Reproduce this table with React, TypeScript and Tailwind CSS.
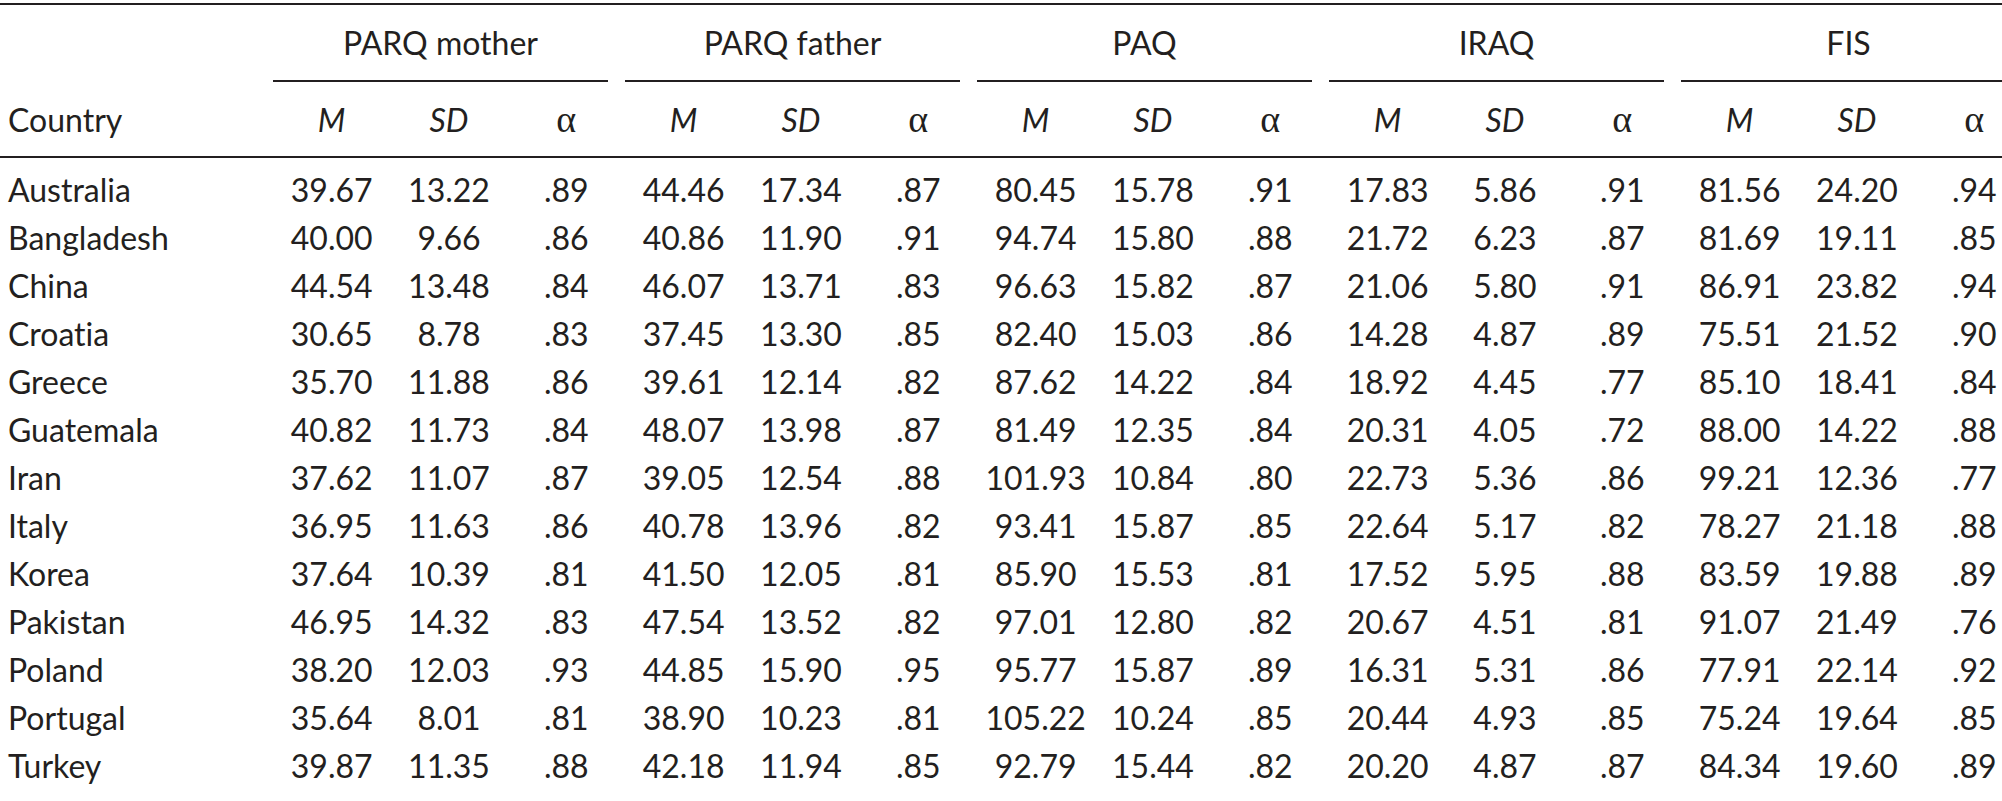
const groups = ['PARQ mother', 'PARQ father', 'PAQ', 'IRAQ', 'FIS'];

const rows: [string, string[]][] = [
  ['Australia', ['39.67', '13.22', '.89', '44.46', '17.34', '.87', '80.45', '15.78', '.91', '17.83', '5.86', '.91', '81.56', '24.20', '.94']],
  ['Bangladesh', ['40.00', '9.66', '.86', '40.86', '11.90', '.91', '94.74', '15.80', '.88', '21.72', '6.23', '.87', '81.69', '19.11', '.85']],
  ['China', ['44.54', '13.48', '.84', '46.07', '13.71', '.83', '96.63', '15.82', '.87', '21.06', '5.80', '.91', '86.91', '23.82', '.94']],
  ['Croatia', ['30.65', '8.78', '.83', '37.45', '13.30', '.85', '82.40', '15.03', '.86', '14.28', '4.87', '.89', '75.51', '21.52', '.90']],
  ['Greece', ['35.70', '11.88', '.86', '39.61', '12.14', '.82', '87.62', '14.22', '.84', '18.92', '4.45', '.77', '85.10', '18.41', '.84']],
  ['Guatemala', ['40.82', '11.73', '.84', '48.07', '13.98', '.87', '81.49', '12.35', '.84', '20.31', '4.05', '.72', '88.00', '14.22', '.88']],
  ['Iran', ['37.62', '11.07', '.87', '39.05', '12.54', '.88', '101.93', '10.84', '.80', '22.73', '5.36', '.86', '99.21', '12.36', '.77']],
  ['Italy', ['36.95', '11.63', '.86', '40.78', '13.96', '.82', '93.41', '15.87', '.85', '22.64', '5.17', '.82', '78.27', '21.18', '.88']],
  ['Korea', ['37.64', '10.39', '.81', '41.50', '12.05', '.81', '85.90', '15.53', '.81', '17.52', '5.95', '.88', '83.59', '19.88', '.89']],
  ['Pakistan', ['46.95', '14.32', '.83', '47.54', '13.52', '.82', '97.01', '12.80', '.82', '20.67', '4.51', '.81', '91.07', '21.49', '.76']],
  ['Poland', ['38.20', '12.03', '.93', '44.85', '15.90', '.95', '95.77', '15.87', '.89', '16.31', '5.31', '.86', '77.91', '22.14', '.92']],
  ['Portugal', ['35.64', '8.01', '.81', '38.90', '10.23', '.81', '105.22', '10.24', '.85', '20.44', '4.93', '.85', '75.24', '19.64', '.85']],
  ['Turkey', ['39.87', '11.35', '.88', '42.18', '11.94', '.85', '92.79', '15.44', '.82', '20.20', '4.87', '.87', '84.34', '19.60', '.89']],
];

function Alpha() {
  return (
    <span className="font-['Liberation_Serif',serif] text-[38px] leading-none">α</span>
  );
}

export default function App() {
  return (
    <div className="h-[801px] w-[2002px] overflow-hidden bg-white font-['Lato','Noto_Sans',sans-serif] text-[32px] leading-[48px] text-[#231f20] [font-variant-ligatures:none]">
      <div className="mt-[3px] h-[2px] bg-[#231f20]" />

      {/* group titles */}
      <div className="grid w-[2033px] grid-cols-[273px_repeat(5,352px)]">
        <div />
        {groups.map((g) => (
          <div key={g} className="pr-[17px] pt-[14px]">
            <div className="text-center">{g}</div>
            <div className="mt-[13px] h-[1.5px] bg-[#231f20]" />
          </div>
        ))}
      </div>

      {/* column labels */}
      <div className="mt-[14px] grid w-[2033px] grid-cols-[273px_repeat(15,117.33px)]">
        <div className="pl-2">Country</div>
        {groups.map((g) => (
          <div key={g} className="contents">
            <div className="text-center italic">M</div>
            <div className="text-center italic">SD</div>
            <div className="text-center">
              <Alpha />
            </div>
          </div>
        ))}
      </div>

      <div className="mt-[12px] h-[2px] bg-[#231f20]" />

      <div className="mt-[8px] flex flex-col">
        {rows.map(([country, vals]) => (
          <div
            key={country}
            className="grid w-[2033px] grid-cols-[273px_repeat(15,117.33px)]"
          >
            <div className="pl-2">{country}</div>
            {vals.map((v, i) => (
              <div key={i} className="text-center">
                {v}
              </div>
            ))}
          </div>
        ))}
      </div>
    </div>
  );
}
